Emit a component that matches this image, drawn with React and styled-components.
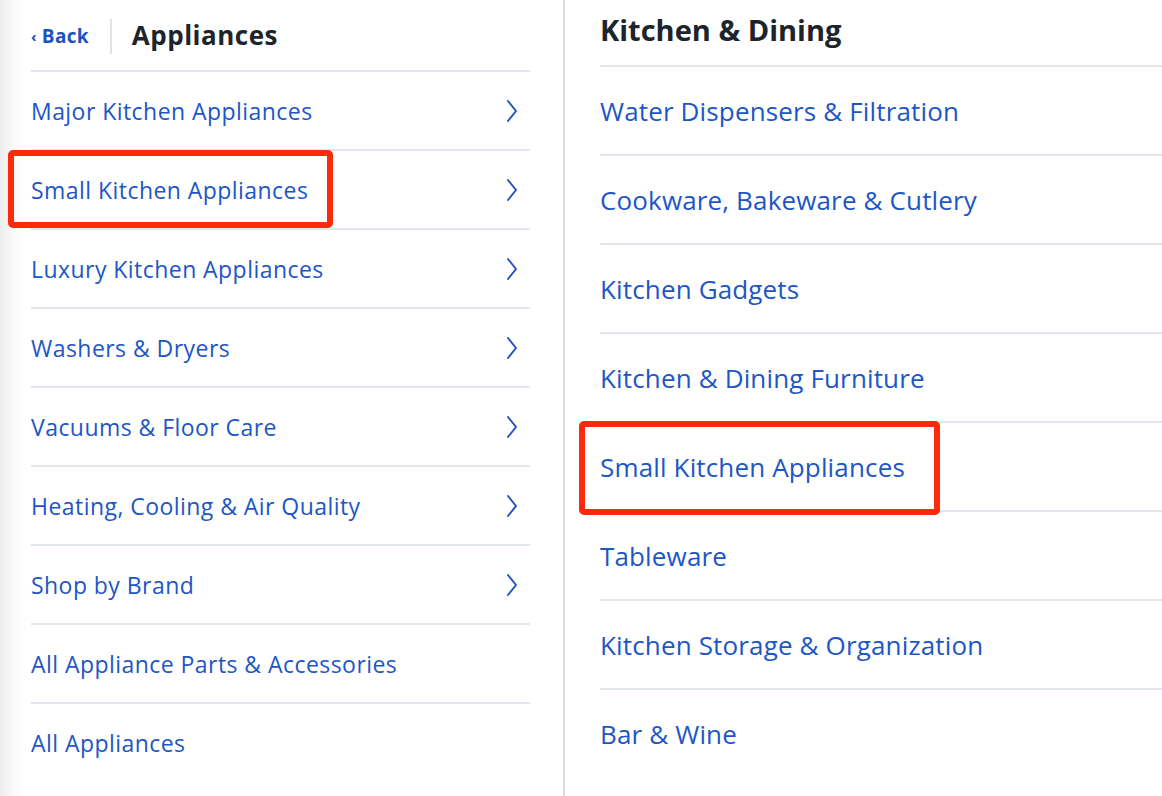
import React from 'react'
import styled, { createGlobalStyle } from 'styled-components';

const Global = createGlobalStyle`
    html, body {
        margin: 0;
        padding: 0;
        background: #fff;
    }
    body {
        font-family: "Open Sans", "Liberation Sans", sans-serif;
        width: 1162px;
        height: 796px;
        overflow: hidden;
    }
`;

const Page = styled.div`
    display: flex;
    width: 1162px;
    height: 796px;
    overflow: hidden;
`;

const Left = styled.div`
    width: 499px;
    flex-shrink: 0;
    padding: 0 33px 0 31px;
    background: linear-gradient(to right, #ececec 0px, #fafafa 14px, #fff 26px);
`;

const Right = styled.div`
    flex: 1;
    border-left: 2px solid #d9dce1;
    padding-left: 35px;
    min-width: 0;
`;

const Header = styled.div`
    display: flex;
    align-items: center;
    height: 70px;
    border-bottom: 2px solid #e1e6ef;
`;

const Back = styled.a`
    color: #1d52c1;
    font-weight: 700;
    font-size: 19px;
    letter-spacing: 0.3px;
    padding-right: 21px;
    margin-right: 20px;
    border-right: 2px solid #dfe2e6;
    height: 35px;
    display: flex;
    align-items: center;
    margin-top: 2px;
`;

const Lt = styled.span`
    font-size: 15px;
    margin-right: 5px;
`;

const Title = styled.h2`
    margin: 0;
    font-size: ${p => p.size}px;
    font-weight: 700;
    color: #1d252c;
    letter-spacing: ${p => p.ls || 0}px;
`;

const RightHeader = styled.div`
    border-bottom: 2px solid #e1e6ef;
    display: flex;
    align-items: center;
    padding-bottom: 6px;
    box-sizing: border-box;
    height: 67px;
`;

const Row = styled.div`
    position: relative;
    display: flex;
    align-items: center;
    justify-content: space-between;
    height: ${p => p.h}px;
    border-bottom: ${p => p.last ? 'none' : '2px solid #e1e6ef'};
    color: #1d56c6;
    font-size: ${p => p.size}px;
    letter-spacing: ${p => p.ls}px;

    &::after {
        content: '';
        display: ${p => p.marked ? 'block' : 'none'};
        position: absolute;
        border: 6px solid #fe2a0b;
        border-radius: 5px;
        left: ${p => p.box ? p.box[0] : 0}px;
        top: ${p => p.box ? p.box[1] : 0}px;
        width: ${p => p.box ? p.box[2] : 0}px;
        height: ${p => p.box ? p.box[3] : 0}px;
        box-sizing: border-box;
    }
`;

const Chevron = () => (
    <svg width="14" height="24" viewBox="0 0 14 24" style={{ marginRight: 11 }}>
        <path d="M3 2 L11 12 L3 22" fill="none" stroke="#1d52c1" strokeWidth="2" strokeLinecap="round" strokeLinejoin="round" />
    </svg>
);

const leftItems = [
    ['Major Kitchen Appliances', true],
    ['Small Kitchen Appliances', true, true],
    ['Luxury Kitchen Appliances', true],
    ['Washers & Dryers', true],
    ['Vacuums & Floor Care', true],
    ['Heating, Cooling & Air Quality', true],
    ['Shop by Brand', true],
    ['All Appliance Parts & Accessories', false],
    ['All Appliances', false],
];

const rightItems = [
    'Water Dispensers & Filtration',
    'Cookware, Bakeware & Cutlery',
    'Kitchen Gadgets',
    'Kitchen & Dining Furniture',
    'Small Kitchen Appliances',
    'Tableware',
    'Kitchen Storage & Organization',
    'Bar & Wine',
];

export default function App() {
    return (
        <Page>
            <Global />
            <Left>
                <Header>
                    <Back><Lt>‹</Lt>Back</Back>
                    <Title size={26} ls={0.5}>Appliances</Title>
                </Header>
                {leftItems.map(([label, arrow, marked], i) => (
                    <Row key={label} h={77} size={23} ls={0.45} last={i === leftItems.length - 1}
                        marked={marked} box={[-23, -1, 325, 78]}>
                        {label}
                        {arrow && <Chevron />}
                    </Row>
                ))}
            </Left>
            <Right>
                <RightHeader>
                    <Title size={29}>Kitchen &amp; Dining</Title>
                </RightHeader>
                {rightItems.map((label, i) => (
                    <Row key={label} h={87} size={26} ls={0.15} last={i === rightItems.length - 1}
                        marked={i === 4} box={[-21, -2, 361, 94]}>
                        {label}
                    </Row>
                ))}
            </Right>
        </Page>
    )
}
